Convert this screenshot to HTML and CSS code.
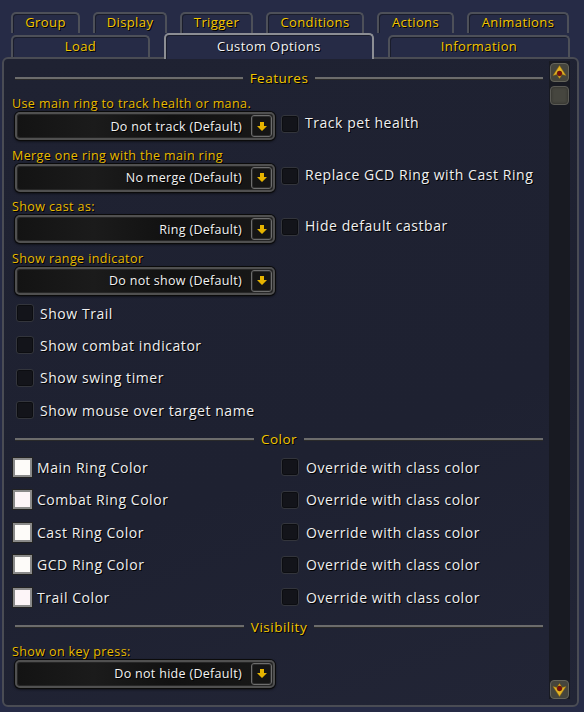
FILE: index.html
```html
<!DOCTYPE html>
<html>
<head>
<meta charset="utf-8">
<link rel="stylesheet" href="styles.css">
</head>
<body>
<div class="tabs">
  <div class="tabrow r1">
    <div class="tab">Group</div>
    <div class="tab">Display</div>
    <div class="tab">Trigger</div>
    <div class="tab">Conditions</div>
    <div class="tab">Actions</div>
    <div class="tab">Animations</div>
  </div>
  <div class="tabrow r2">
    <div class="tab">Load</div>
    <div class="tab active">Custom Options</div>
    <div class="tab">Information</div>
  </div>
</div>
<div class="panel">
  <div class="content">
    <div class="header"><span class="line"></span><span class="htext">Features</span><span class="line"></span></div>

    <div class="label">Use main ring to track health or mana.</div>
    <div class="ddrow">
      <div class="dd"><span class="dd-text">Do not track (Default)</span><span class="dd-btn"><svg width="10" height="9" viewBox="0 0 10 9"><path d="M3 0h4v4h3l-5 5-5-5h3z" fill="#e6b400"/></svg></span></div>
      <span class="cb"></span><span class="txt">Track pet health</span>
    </div>

    <div class="label">Merge one ring with the main ring</div>
    <div class="ddrow">
      <div class="dd"><span class="dd-text">No merge (Default)</span><span class="dd-btn"><svg width="10" height="9" viewBox="0 0 10 9"><path d="M3 0h4v4h3l-5 5-5-5h3z" fill="#e6b400"/></svg></span></div>
      <span class="cb"></span><span class="txt">Replace GCD Ring with Cast Ring</span>
    </div>

    <div class="label">Show cast as:</div>
    <div class="ddrow">
      <div class="dd"><span class="dd-text">Ring (Default)</span><span class="dd-btn"><svg width="10" height="9" viewBox="0 0 10 9"><path d="M3 0h4v4h3l-5 5-5-5h3z" fill="#e6b400"/></svg></span></div>
      <span class="cb"></span><span class="txt">Hide default castbar</span>
    </div>

    <div class="label">Show range indicator</div>
    <div class="ddrow">
      <div class="dd"><span class="dd-text">Do not show (Default)</span><span class="dd-btn"><svg width="10" height="9" viewBox="0 0 10 9"><path d="M3 0h4v4h3l-5 5-5-5h3z" fill="#e6b400"/></svg></span></div>
    </div>

    <div class="chkrow first"><span class="cb"></span><span class="txt">Show Trail</span></div>
    <div class="chkrow"><span class="cb"></span><span class="txt">Show combat indicator</span></div>
    <div class="chkrow"><span class="cb"></span><span class="txt">Show swing timer</span></div>
    <div class="chkrow"><span class="cb"></span><span class="txt">Show mouse over target name</span></div>

    <div class="header hcolor"><span class="line"></span><span class="htext">Color</span><span class="line"></span></div>

    <div class="colors">
      <div class="crow"><span class="sw"></span><span class="txt">Main Ring Color</span></div>
      <div class="crow"><span class="cb"></span><span class="txt">Override with class color</span></div>
      <div class="crow"><span class="sw pink"></span><span class="txt">Combat Ring Color</span></div>
      <div class="crow"><span class="cb"></span><span class="txt">Override with class color</span></div>
      <div class="crow"><span class="sw"></span><span class="txt">Cast Ring Color</span></div>
      <div class="crow"><span class="cb"></span><span class="txt">Override with class color</span></div>
      <div class="crow"><span class="sw"></span><span class="txt">GCD Ring Color</span></div>
      <div class="crow"><span class="cb"></span><span class="txt">Override with class color</span></div>
      <div class="crow"><span class="sw pink"></span><span class="txt">Trail Color</span></div>
      <div class="crow"><span class="cb"></span><span class="txt">Override with class color</span></div>
    </div>

    <div class="header hvis"><span class="line"></span><span class="htext">Visibility</span><span class="line"></span></div>

    <div class="label">Show on key press:</div>
    <div class="ddrow">
      <div class="dd"><span class="dd-text">Do not hide (Default)</span><span class="dd-btn"><svg width="10" height="9" viewBox="0 0 10 9"><path d="M3 0h4v4h3l-5 5-5-5h3z" fill="#e6b400"/></svg></span></div>
    </div>
  </div>
  <div class="scroll">
    <span class="sbtn"><svg width="19" height="19" viewBox="0 0 19 19"><rect x="0.5" y="0.5" width="18" height="18" rx="3.5" fill="#45453d" stroke="#64645a"/><path d="M9.5 2.5 L16 12.5 L12.2 11.5 L9.5 15.5 L6.8 11.5 L3 12.5 Z" fill="#e2b324" stroke="#8a6a10" stroke-width="0.5"/><circle cx="9.5" cy="10.5" r="2.4" fill="#7a0d0d" stroke="#3a0505" stroke-width="0.5"/></svg></span>
    <span class="thumb"></span>
    <span class="spacer"></span>
    <span class="sbtn"><svg width="19" height="19" viewBox="0 0 19 19"><rect x="0.5" y="0.5" width="18" height="18" rx="3.5" fill="#45453d" stroke="#64645a"/><path d="M9.5 16.5 L16 6.5 L12.2 7.5 L9.5 3.5 L6.8 7.5 L3 6.5 Z" fill="#e2b324" stroke="#8a6a10" stroke-width="0.5"/><circle cx="9.5" cy="8.5" r="2.4" fill="#7a0d0d" stroke="#3a0505" stroke-width="0.5"/></svg></span>
  </div>
</div>
</body>
</html>
```
FILE: styles.css
```css
html, body {
  margin: 0;
  padding: 0;
}
body {
  width: 584px;
  height: 712px;
  overflow: hidden;
  background: #262b46;
  font-family: "Open Sans", "DejaVu Sans", sans-serif;
}
.tabs {
  padding-top: 12px;
}
.tabrow {
  display: flex;
  gap: 13px;
  padding-left: 11px;
}
.r2 {
  margin-top: 2px;
  gap: 14px;
  align-items: flex-end;
}
.tab {
  box-sizing: border-box;
  height: 21px;
  padding-bottom: 4px;
  border: 2px solid #4d5059;
  border-bottom: none;
  border-radius: 5px 5px 0 0;
  display: flex;
  align-items: center;
  justify-content: center;
  color: #f3c600;
  font-size: 13px;
  letter-spacing: 0.4px;
  text-shadow: 1px 1px 0 #000;
  box-shadow: inset 1px 1px 0 #1a1d2c;
}
.r1 .tab:nth-child(1) { width: 69px; }
.r1 .tab:nth-child(2) { width: 74px; }
.r1 .tab:nth-child(3) { width: 73px; }
.r1 .tab:nth-child(4) { width: 98px; }
.r1 .tab:nth-child(5) { width: 77px; }
.r1 .tab:nth-child(6) { width: 102px; }
.r2 .tab { height: 22px; padding-bottom: 3px; }
.r2 .tab:nth-child(1) { width: 139px; }
.r2 .tab:nth-child(3) { width: 182px; }
.r2 .tab.active {
  width: 210px;
  height: 26px;
  margin-top: -2px;
  margin-bottom: -2px;
  padding-bottom: 2px;
  position: relative;
  z-index: 1;
  border-color: #8c8e94;
  background: #262b46;
  color: #f4f4f4;
}
.panel {
  box-sizing: border-box;
  width: 577px;
  height: 650px;
  margin-left: 2px;
  border: 2px solid #4a4c54;
  border-radius: 6px;
  background: linear-gradient(160deg, #1f2232 0%, #1e2131 60%, #222536 100%);
  display: flex;
}
.content {
  flex: 1;
  padding: 11px 6px 0 8px;
}
.header {
  display: flex;
  align-items: center;
  height: 16px;
  margin-left: 3px;
}
.header .line {
  flex: 1;
  height: 2px;
  background: #6c6c6c;
  border-bottom: 1px solid #2a2a2a;
}
.htext {
  color: #f3c600;
  font-size: 13.5px;
  letter-spacing: 0.5px;
  padding: 0 7px;
  text-shadow: 1px 1px 0 #000;
}
.label {
  color: #e9bb00;
  font-size: 12.5px;
  letter-spacing: 0.4px;
  line-height: 16px;
  height: 16px;
  margin-top: 10px;
  text-shadow: 1px 1px 0 #000;
  white-space: nowrap;
}
.ddrow + .label { margin-top: 7.5px; }
.ddrow {
  display: flex;
  align-items: flex-start;
  margin-left: 3px;
}
.dd {
  box-sizing: border-box;
  width: 260px;
  height: 28px;
  border: 2px solid #505050;
  border-radius: 5px;
  background: linear-gradient(90deg, #131313 0%, #1b1b1b 30%, #111 60%, #181818 100%);
  box-shadow: inset 0 0 0 1px #262626, 0 0 0 1px #0b0b0b, 0 1px 3px #000;
  display: flex;
  align-items: center;
  justify-content: flex-end;
  padding-right: 1px;
}
.dd-text {
  color: #f2f2f2;
  font-size: 12.5px;
  letter-spacing: 0.3px;
  margin-right: 9px;
  text-shadow: 1px 1px 0 #000;
}
.dd-btn {
  box-sizing: border-box;
  width: 21px;
  height: 22px;
  border: 1px solid #6d6d6d;
  border-radius: 3px;
  background: #151515;
  box-shadow: inset 0 0 0 1px #2c2c2c;
  display: flex;
  align-items: center;
  justify-content: center;
}
.cb {
  box-sizing: border-box;
  width: 18px;
  height: 18px;
  flex: none;
  border: 1px solid #33353c;
  border-radius: 3px;
  background: #13141a;
  box-shadow: inset 0 0 0 1px #0c0d11;
}
.ddrow .cb {
  margin-left: 6px;
  margin-top: 3px;
}
.txt {
  color: #f0f0f0;
  font-size: 14px;
  letter-spacing: 0.55px;
  text-shadow: 1px 1px 0 #000;
  white-space: nowrap;
}
.ddrow .txt {
  margin-left: 6px;
  line-height: 22px;
}
.chkrow {
  display: flex;
  align-items: center;
  height: 32.3px;
  padding-left: 4px;
}
.chkrow.first { margin-top: 2.5px; }
.chkrow .txt { margin-left: 6px; }
.hcolor { margin-top: 5px; }
.colors {
  display: grid;
  grid-template-columns: 269px auto;
  margin-top: 4px;
}
.crow {
  display: flex;
  align-items: center;
  height: 32.5px;
}
.crow .cb + .txt { margin-left: 7px; }
.crow .sw + .txt { margin-left: 5px; }
.sw {
  box-sizing: border-box;
  width: 19px;
  height: 19px;
  margin-left: 1px;
  border: 2px solid #8a8a8a;
  background: #fdfbf9;
  box-shadow: 0 0 0 1px #222;
}
.sw.pink { background: #fdf5f8; }
.hvis { margin-top: 5px; }
.hvis + .label { margin-top: 9px; }
.scroll {
  width: 21px;
  margin: 2px 7px 6px 0;
  background: #181a22;
  display: flex;
  flex-direction: column;
  align-items: center;
  padding-top: 2px;
}
.sbtn {
  width: 19px;
  height: 19px;
  display: block;
}
.sbtn svg { display: block; }
.thumb {
  box-sizing: border-box;
  width: 19px;
  height: 19px;
  margin-top: 4px;
  border: 1px solid #5a5a55;
  border-radius: 4px;
  background: #46463f;
  box-shadow: inset 0 0 3px #2a2a26;
}
.spacer { flex: 1; }
```
